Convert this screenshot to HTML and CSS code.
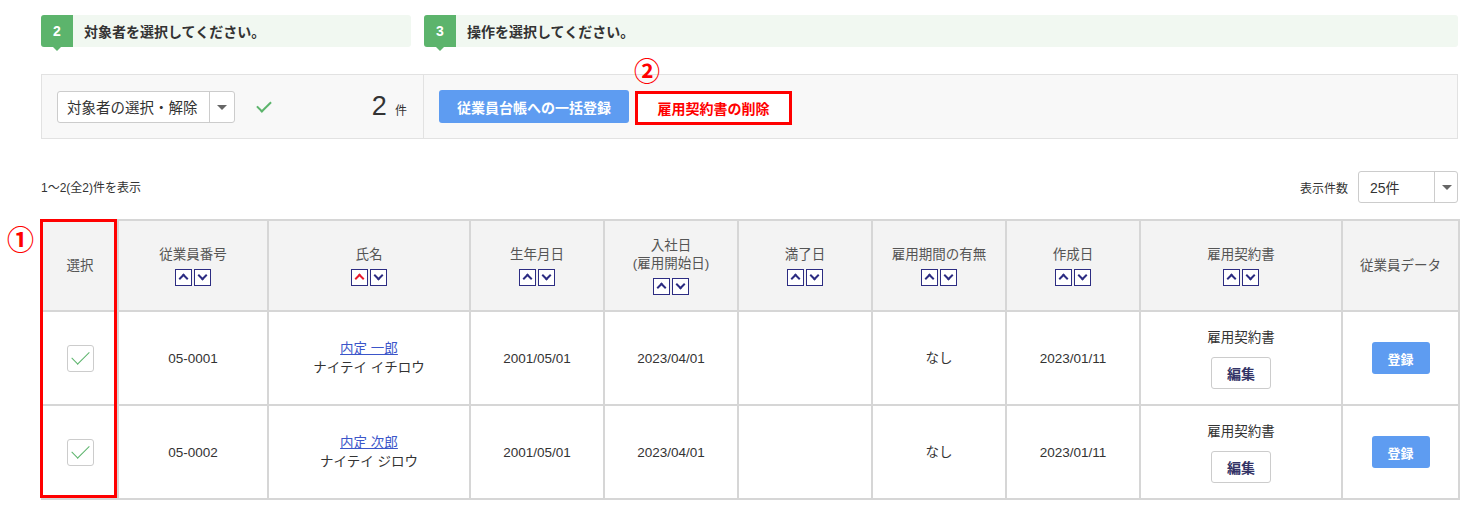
FILE: index.html
```html
<!DOCTYPE html>
<html lang="ja">
  <head>
    <meta charset="UTF-8" />
    <meta name="viewport" content="width=device-width, initial-scale=1.0" />
    <title>雇用契約書</title>
    <link rel="stylesheet" href="styles.css">
  </head>
  <body>
    <div id="page">
      <div class="steps">
        <div class="step step-target">
          <span class="step-no">2</span>
          <span class="step-text">対象者を選択してください。</span>
        </div>
        <div class="step step-action">
          <span class="step-no">3</span>
          <span class="step-text">操作を選択してください。</span>
        </div>
      </div>

      <div class="panel">
        <div class="panel-left">
          <div class="select select-target">
            <span class="select-label">対象者の選択・解除</span>
            <span class="select-arrow"></span>
          </div>
          <span class="check-mark"></span>
          <span class="count"><b>2</b> 件</span>
        </div>
        <div class="panel-right">
          <button class="btn btn-blue">従業員台帳への一括登録</button>
          <div class="delete-wrap">
            <span class="mark mark-2">②</span>
            <button class="btn btn-delete">雇用契約書の削除</button>
          </div>
        </div>
      </div>

      <div class="list-bar">
        <span class="list-info">1〜2(全2)件を表示</span>
        <div class="per-page">
          <span>表示件数</span>
          <div class="select select-page">
            <span class="select-label">25件</span>
            <span class="select-arrow"></span>
          </div>
        </div>
      </div>

      <div class="table-wrap">
        <span class="mark mark-1">①</span>
        <div class="col-highlight"></div>
        <table id="employees">
          <colgroup>
            <col style="width:76px" />
            <col style="width:150px" />
            <col style="width:202px" />
            <col style="width:134px" />
            <col style="width:134px" />
            <col style="width:134px" />
            <col style="width:134px" />
            <col style="width:134px" />
            <col style="width:202px" />
            <col style="width:117px" />
          </colgroup>
          <thead>
            <tr>
              <th>選択</th>
              <th>従業員番号<div class="sorts"><span class="sort up"></span><span class="sort down"></span></div></th>
              <th>氏名<div class="sorts"><span class="sort up active"></span><span class="sort down"></span></div></th>
              <th>生年月日<div class="sorts"><span class="sort up"></span><span class="sort down"></span></div></th>
              <th>入社日<br />(雇用開始日)<div class="sorts"><span class="sort up"></span><span class="sort down"></span></div></th>
              <th>満了日<div class="sorts"><span class="sort up"></span><span class="sort down"></span></div></th>
              <th>雇用期間の有無<div class="sorts"><span class="sort up"></span><span class="sort down"></span></div></th>
              <th>作成日<div class="sorts"><span class="sort up"></span><span class="sort down"></span></div></th>
              <th>雇用契約書<div class="sorts"><span class="sort up"></span><span class="sort down"></span></div></th>
              <th>従業員データ</th>
            </tr>
          </thead>
          <tbody>
            <tr>
              <td><span class="checkbox"></span></td>
              <td>05-0001</td>
              <td><a href="#" class="name">内定 一郎</a><br />ナイテイ イチロウ</td>
              <td>2001/05/01</td>
              <td>2023/04/01</td>
              <td></td>
              <td>なし</td>
              <td>2023/01/11</td>
              <td>雇用契約書<br /><button class="btn btn-edit">編集</button></td>
              <td><button class="btn btn-reg">登録</button></td>
            </tr>
            <tr>
              <td><span class="checkbox"></span></td>
              <td>05-0002</td>
              <td><a href="#" class="name">内定 次郎</a><br />ナイテイ ジロウ</td>
              <td>2001/05/01</td>
              <td>2023/04/01</td>
              <td></td>
              <td>なし</td>
              <td>2023/01/11</td>
              <td>雇用契約書<br /><button class="btn btn-edit">編集</button></td>
              <td><button class="btn btn-reg">登録</button></td>
            </tr>
          </tbody>
        </table>
      </div>
    </div>
  </body>
</html>
```

FILE: styles.css
```css
body {
  margin: 0;
  background: #fff;
  color: #333;
  font-family: "Liberation Sans", "Noto Sans CJK JP", sans-serif;
}

#page {
  padding: 15px 26px 0 41px;
}

.steps {
  display: flex;
  gap: 13px;
}

.step {
  display: flex;
  align-items: center;
  height: 32px;
  background: #f1f8f1;
  border-radius: 3px;
}

.step-target {
  width: 370px;
}

.step-action {
  flex: 1;
}

.step-no {
  position: relative;
  width: 32px;
  height: 32px;
  line-height: 32px;
  text-align: center;
  background: #5cb46c;
  color: #fff;
  font-weight: bold;
  font-size: 14px;
  border-radius: 3px 0 0 3px;
}

.step-no::after {
  content: "";
  position: absolute;
  left: 12px;
  bottom: -4px;
  border-left: 4px solid transparent;
  border-right: 4px solid transparent;
  border-top: 4px solid #5cb46c;
}

.step-text {
  margin-left: 11px;
  font-size: 14px;
  font-weight: bold;
  color: #333;
}

.panel {
  display: flex;
  margin-top: 27px;
  height: 63px;
  background: #f8f8f8;
  border: 1px solid #e2e2e2;
}

.panel-left {
  display: flex;
  align-items: center;
  width: 382px;
  padding-left: 15px;
  box-sizing: border-box;
  border-right: 1px solid #e2e2e2;
}

.select {
  display: flex;
  align-items: stretch;
  height: 30px;
  background: #fff;
  border: 1px solid #ccc;
  border-radius: 3px;
  font-size: 14px;
}

.select-label {
  display: flex;
  align-items: center;
  padding-left: 9px;
}

.select-arrow {
  position: relative;
  width: 24px;
  border-left: 1px solid #ccc;
}

.select-arrow::after {
  content: "";
  position: absolute;
  left: 7px;
  top: 13px;
  border-left: 5px solid transparent;
  border-right: 5px solid transparent;
  border-top: 5px solid #666;
}

.select-target {
  width: 176px;
  font-size: 14.5px;
}

.select-target .select-label {
  flex: 1;
}

.check-mark {
  width: 6px;
  height: 12px;
  margin-left: 25px;
  margin-top: -4px;
  border-right: 2px solid #5cb46c;
  border-bottom: 2px solid #5cb46c;
  transform: rotate(45deg);
}

.count {
  margin-left: auto;
  margin-right: 16px;
  font-size: 12px;
}

.count b {
  font-weight: normal;
  font-size: 27px;
  margin-right: 5px;
}

.panel-right {
  display: flex;
  align-items: center;
  padding-left: 15px;
  gap: 6px;
}

.btn {
  font-family: inherit;
  border-radius: 3px;
  cursor: pointer;
}

.btn-blue {
  width: 190px;
  height: 33px;
  background: #5e9cf1;
  border: none;
  color: #fff;
  font-weight: bold;
  font-size: 14px;
}

.delete-wrap {
  position: relative;
}

.btn-delete {
  width: 157px;
  height: 34px;
  margin-top: 2px;
  background: #fff;
  border: 3px solid #f00;
  border-radius: 0;
  color: #f00;
  font-weight: bold;
  font-size: 14px;
}

.mark {
  position: absolute;
  color: #f00;
  font-weight: bold;
  line-height: 1;
  font-family: "Noto Sans CJK JP", sans-serif;
}

.mark-2 {
  left: -1px;
  top: -32px;
  font-size: 26px;
}

.list-bar {
  display: flex;
  align-items: center;
  justify-content: space-between;
  margin-top: 32px;
  font-size: 12px;
  color: #333;
}

.list-info {
  margin-top: -2px;
}

.per-page {
  display: flex;
  align-items: center;
  gap: 10px;
}

.select-page {
  width: 98px;
}

.select-page .select-label {
  flex: 1;
  padding-left: 11px;
}

.select-page .select-arrow {
  width: 22px;
}

.table-wrap {
  position: relative;
  margin-top: 16px;
}

#employees {
  width: 1417px;
  border-collapse: collapse;
  table-layout: fixed;
  font-size: 13.5px;
}

#employees th,
#employees td {
  border: 2px solid #d6d6d6;
  text-align: center;
  vertical-align: middle;
  padding: 0;
}

#employees th {
  height: 89px;
  background: #f3f3f3;
  font-weight: normal;
  color: #555;
  line-height: 18px;
}

#employees td {
  height: 92px;
  color: #333;
  line-height: 19px;
}

.sorts {
  display: flex;
  justify-content: center;
  gap: 2px;
  margin-top: 5px;
}

.sort {
  position: relative;
  width: 15px;
  height: 15px;
  background: #fff;
  border: 1px solid #2c2c82;
}

.sort::after {
  content: "";
  position: absolute;
  left: 4px;
  width: 5px;
  height: 5px;
  border-left: 2px solid #2c2c82;
  border-top: 2px solid #2c2c82;
}

.sort.up::after {
  top: 5px;
  transform: rotate(45deg);
}

.sort.down::after {
  top: 2px;
  transform: rotate(-135deg);
}

.sort.active::after {
  border-color: #e8192c;
}

.checkbox {
  position: relative;
  display: inline-block;
  width: 25px;
  height: 25px;
  border: 1px solid #ccc;
  border-radius: 3px;
  background: #fff;
  vertical-align: middle;
}

.checkbox::after {
  content: "";
  position: absolute;
  left: 8px;
  top: 1px;
  width: 8px;
  height: 16px;
  border-right: 1.5px solid #5cb46c;
  border-bottom: 1.5px solid #5cb46c;
  transform: rotate(45deg);
}

.name {
  color: #3b55c9;
}

.btn-edit {
  width: 60px;
  height: 32px;
  margin-top: 10px;
  background: #fff;
  border: 1px solid #ccc;
  color: #333366;
  font-weight: bold;
  font-size: 14px;
}

.btn-reg {
  width: 58px;
  height: 32px;
  background: #5e9cf1;
  border: none;
  color: #fff;
  font-weight: bold;
  font-size: 13px;
}

.col-highlight {
  position: absolute;
  left: -1px;
  top: 0;
  width: 71px;
  height: 273px;
  border: 3px solid #f00;
  pointer-events: none;
  z-index: 2;
}

.mark-1 {
  left: -34px;
  top: 6px;
  font-size: 27px;
}
```
